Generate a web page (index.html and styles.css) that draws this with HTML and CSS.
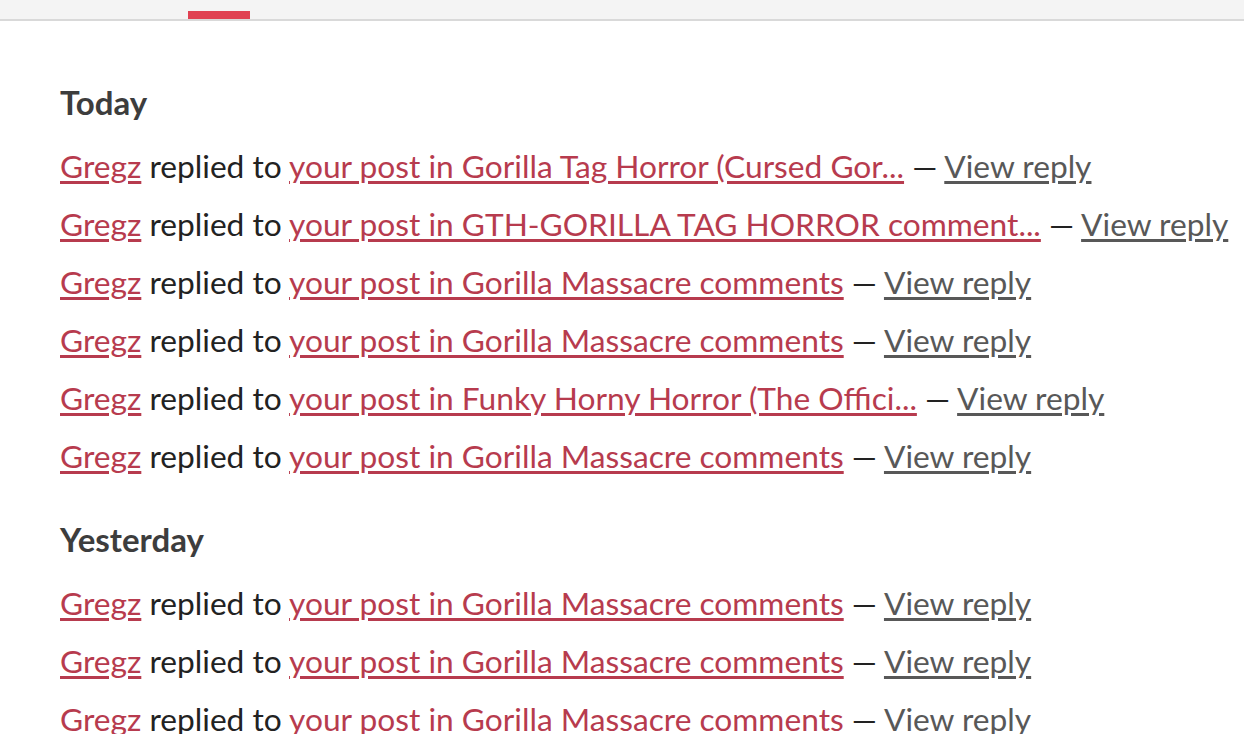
FILE: index.html
```html
<!DOCTYPE html>
<html lang="en">

<head>
    <meta charset="UTF-8">
    <meta name="viewport" content="width=device-width, initial-scale=1.0">
    <title>Notifications</title>
    <link rel="stylesheet" href="styles.css">
</head>

<body>

    <div class="top-bar">
        <div class="tab-indicator"></div>
    </div>

    <div class="notifications">
        <div class="day-group">
            <h2>Today</h2>
            <ul>
                <li><a href="#">Gregz</a> replied to <a href="#">your post in Gorilla Tag Horror (Cursed Gor...</a> — <a class="view" href="#">View reply</a></li>
                <li><a href="#">Gregz</a> replied to <a href="#">your post in GTH-GORILLA TAG HORROR comment...</a> — <a class="view" href="#">View reply</a></li>
                <li><a href="#">Gregz</a> replied to <a href="#">your post in Gorilla Massacre comments</a> — <a class="view" href="#">View reply</a></li>
                <li><a href="#">Gregz</a> replied to <a href="#">your post in Gorilla Massacre comments</a> — <a class="view" href="#">View reply</a></li>
                <li><a href="#">Gregz</a> replied to <a href="#">your post in Funky Horny Horror (The Offici...</a> — <a class="view" href="#">View reply</a></li>
                <li><a href="#">Gregz</a> replied to <a href="#">your post in Gorilla Massacre comments</a> — <a class="view" href="#">View reply</a></li>
            </ul>
        </div>

        <div class="day-group">
            <h2>Yesterday</h2>
            <ul>
                <li><a href="#">Gregz</a> replied to <a href="#">your post in Gorilla Massacre comments</a> — <a class="view" href="#">View reply</a></li>
                <li><a href="#">Gregz</a> replied to <a href="#">your post in Gorilla Massacre comments</a> — <a class="view" href="#">View reply</a></li>
                <li><a href="#">Gregz</a> replied to <a href="#">your post in Gorilla Massacre comments</a> — <a class="view" href="#">View reply</a></li>
            </ul>
        </div>
    </div>

</body>

</html>
```

FILE: styles.css
```css
body {
    font-family: Lato, "Noto Sans", sans-serif;
    background-color: #ffffff;
    color: #222222;
    margin: 0;
    overflow: hidden;
}

.top-bar {
    height: 19px;
    background-color: #f4f4f4;
    border-bottom: 2px solid #d9d9d9;
    position: relative;
}

.tab-indicator {
    position: absolute;
    left: 188px;
    bottom: 0;
    width: 62px;
    height: 8px;
    background-color: #e04152;
}

.notifications {
    padding: 63px 60px 0;
}

.day-group {
    margin-bottom: 36px;
}

h2 {
    color: #3d3d3d;
    font-size: 33px;
    font-weight: 700;
    margin: 0;
    line-height: 36px;
}

ul {
    list-style: none;
    padding: 0;
    margin: 17px 0 0;
}

li {
    font-size: 31.7px;
    line-height: 58px;
    white-space: nowrap;
}

a {
    color: #b73b4e;
    text-underline-offset: 3px;
}

a.view {
    color: #585858;
}
```
